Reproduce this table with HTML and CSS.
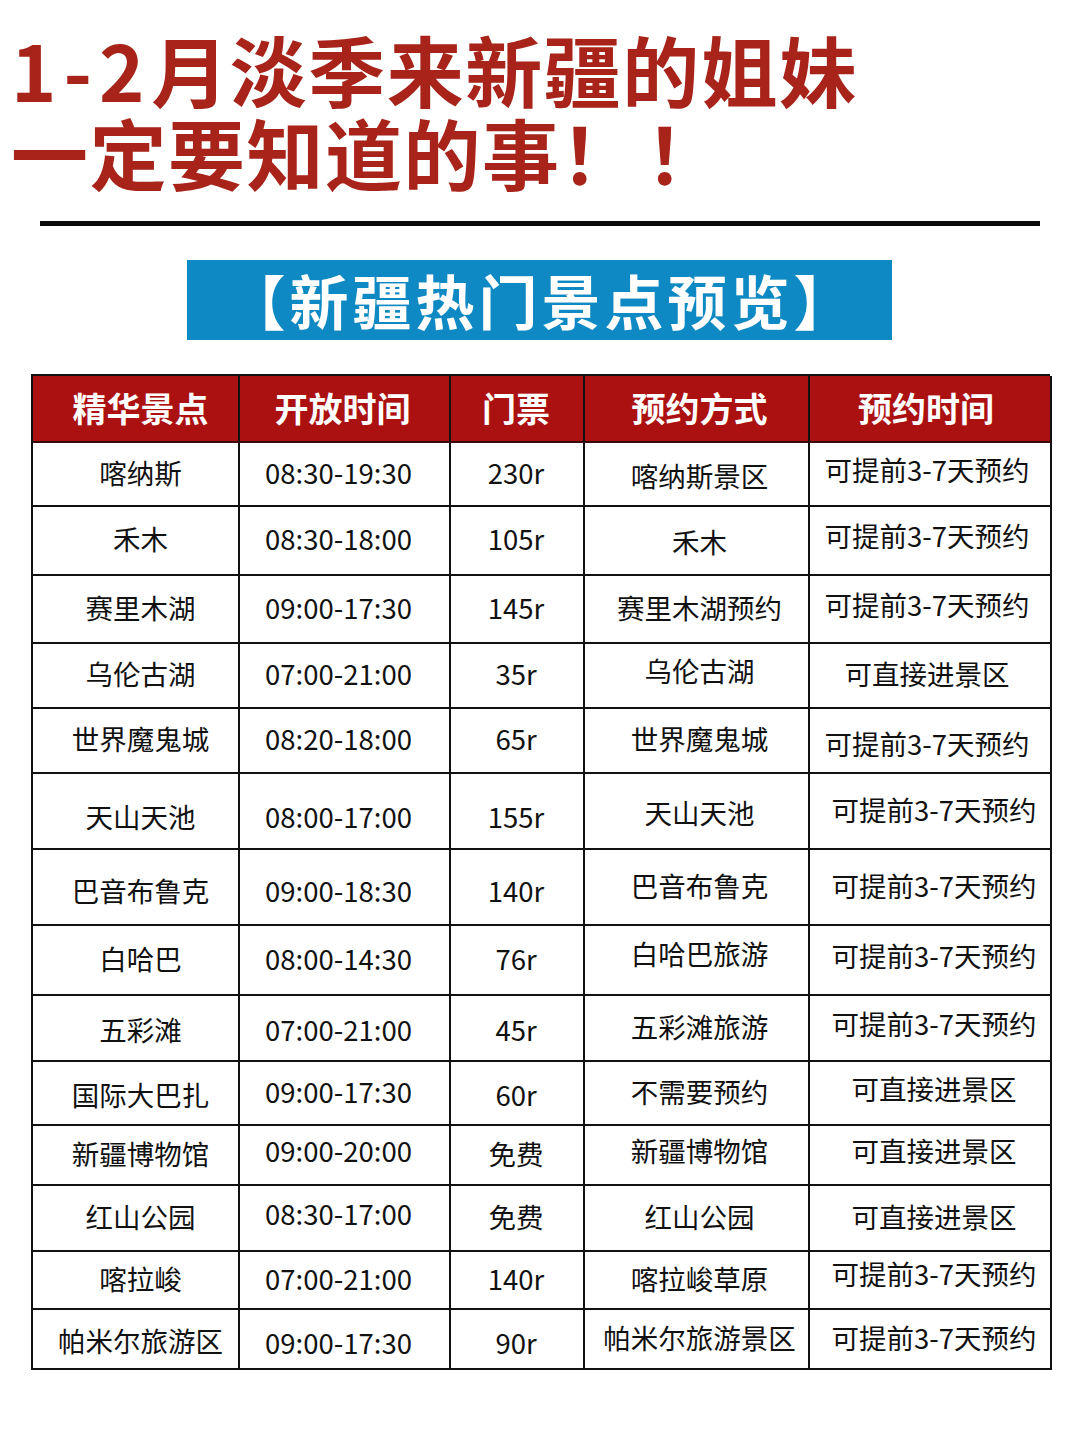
FILE: index.html
```html
<!DOCTYPE html>
<html lang="zh-CN">
<head>
<meta charset="utf-8">
<title>1-2月淡季来新疆的姐妹一定要知道的事</title>
<link rel="stylesheet" href="styles.css">
</head>
<body>
<div class="page">
  <h1 class="title">
    <span class="line"><span class="num">1-2</span>月淡季来新疆的姐妹</span>
    <span class="line">一定要知道的事<span class="bang">！！</span></span>
  </h1>
  <div class="rule"></div>
  <div class="banner">【新疆热门景点预览】</div>
  <div class="grid">
    <div class="cell head">精华景点</div>
    <div class="cell head">开放时间</div>
    <div class="cell head">门票</div>
    <div class="cell head">预约方式</div>
    <div class="cell head">预约时间</div>

    <div class="cell">喀纳斯</div><div class="cell">08:30-19:30</div><div class="cell">230r</div><div class="cell d3">喀纳斯景区</div><div class="cell u3 l">可提前3-7天预约</div>
    <div class="cell">禾木</div><div class="cell">08:30-18:00</div><div class="cell">105r</div><div class="cell d3">禾木</div><div class="cell u3 l">可提前3-7天预约</div>
    <div class="cell">赛里木湖</div><div class="cell">09:00-17:30</div><div class="cell">145r</div><div class="cell">赛里木湖预约</div><div class="cell u3 l">可提前3-7天预约</div>
    <div class="cell">乌伦古湖</div><div class="cell">07:00-21:00</div><div class="cell">35r</div><div class="cell u3">乌伦古湖</div><div class="cell l">可直接进景区</div>
    <div class="cell">世界魔鬼城</div><div class="cell">08:20-18:00</div><div class="cell">65r</div><div class="cell">世界魔鬼城</div><div class="cell d5 l">可提前3-7天预约</div>
    <div class="cell d7">天山天池</div><div class="cell d7">08:00-17:00</div><div class="cell d7">155r</div><div class="cell d3">天山天池</div><div class="cell r">可提前3-7天预约</div>
    <div class="cell d5">巴音布鲁克</div><div class="cell d5">09:00-18:30</div><div class="cell d5">140r</div><div class="cell">巴音布鲁克</div><div class="cell r">可提前3-7天预约</div>
    <div class="cell">白哈巴</div><div class="cell">08:00-14:30</div><div class="cell">76r</div><div class="cell u5">白哈巴旅游</div><div class="cell u3 r">可提前3-7天预约</div>
    <div class="cell d3">五彩滩</div><div class="cell d3">07:00-21:00</div><div class="cell d3">45r</div><div class="cell">五彩滩旅游</div><div class="cell u3 r">可提前3-7天预约</div>
    <div class="cell d3">国际大巴扎</div><div class="cell">09:00-17:30</div><div class="cell d3">60r</div><div class="cell">不需要预约</div><div class="cell u3 r">可直接进景区</div>
    <div class="cell">新疆博物馆</div><div class="cell u3">09:00-20:00</div><div class="cell">免费</div><div class="cell u3">新疆博物馆</div><div class="cell u3 r">可直接进景区</div>
    <div class="cell">红山公园</div><div class="cell u3">08:30-17:00</div><div class="cell">免费</div><div class="cell">红山公园</div><div class="cell r">可直接进景区</div>
    <div class="cell">喀拉峻</div><div class="cell">07:00-21:00</div><div class="cell">140r</div><div class="cell">喀拉峻草原</div><div class="cell u5 r">可提前3-7天预约</div>
    <div class="cell d3">帕米尔旅游区</div><div class="cell d5">09:00-17:30</div><div class="cell d5">90r</div><div class="cell">帕米尔旅游景区</div><div class="cell r">可提前3-7天预约</div>
  </div>
</div>
</body>
</html>
```

FILE: styles.css
```css
* { box-sizing: border-box; }
html, body {
  margin: 0;
  padding: 0;
  background: #ffffff;
}
body {
  font-family: "Noto Sans CJK SC", "Noto Sans", sans-serif;
  width: 1080px;
  height: 1440px;
  overflow: hidden;
}
.page {
  display: flex;
  flex-direction: column;
  padding-top: 27px;
}
.title {
  margin: 0;
  padding-left: 11px;
  display: flex;
  flex-direction: column;
  font-size: 77px;
  line-height: 83px;
  font-weight: 700;
  color: #a82319;
  letter-spacing: 1.5px;
  white-space: nowrap;
}
.title .num {
  letter-spacing: 7px;
}
.title .bang {
  letter-spacing: 8px;
}
.rule {
  margin: 28px 0 0 40px;
  width: 1000px;
  height: 5px;
  background: #0a0a0a;
}
.banner {
  margin: 34px 0 0 187px;
  width: 705px;
  height: 80px;
  padding-left: 4px;
  background: #0e89c3;
  color: #ffffff;
  font-size: 59px;
  font-weight: 700;
  line-height: 80px;
  letter-spacing: 4px;
  text-align: center;
  white-space: nowrap;
}
.grid {
  margin: 34px 0 0 31px;
  width: 1019px;
  display: grid;
  grid-template-columns: 207px 211px 134px 225px 242px;
  grid-template-rows: 67px 64px 69px 68px 65px 65px 76px 76px 70px 66px 64px 60px 66px 58px 60px;
  border-left: 2px solid #111111;
  border-top: 2px solid #111111;
}
.cell {
  display: flex;
  align-items: center;
  justify-content: center;
  padding-bottom: 5px;
  border-right: 2px solid #111111;
  border-bottom: 2px solid #111111;
  font-size: 27.5px;
  color: #111111;
  white-space: nowrap;
}
.cell:nth-child(5n+1) { padding-left: 10px; }
.cell:nth-child(5n+2) { padding-right: 12px; }
.cell:nth-child(5n+3) { padding-right: 2px; }
.cell:nth-child(5n+4) { padding-left: 6px; }

.head {
  background: #ac1111;
  color: #ffffff;
  font-size: 34px;
  font-weight: 700;
  padding-bottom: 2px;
  border-bottom-color: #3a0a0a;
}
.head:nth-child(2) { padding-right: 4px; }
.head:nth-child(5) { padding-right: 8px; }

.d3 { padding-top: 6px; }
.d5 { padding-top: 10px; }
.d7 { padding-top: 14px; }
.u3 { padding-bottom: 11px; }
.u5 { padding-bottom: 15px; }
.l { padding-right: 6px; }
.r { padding-left: 8px; }
```
